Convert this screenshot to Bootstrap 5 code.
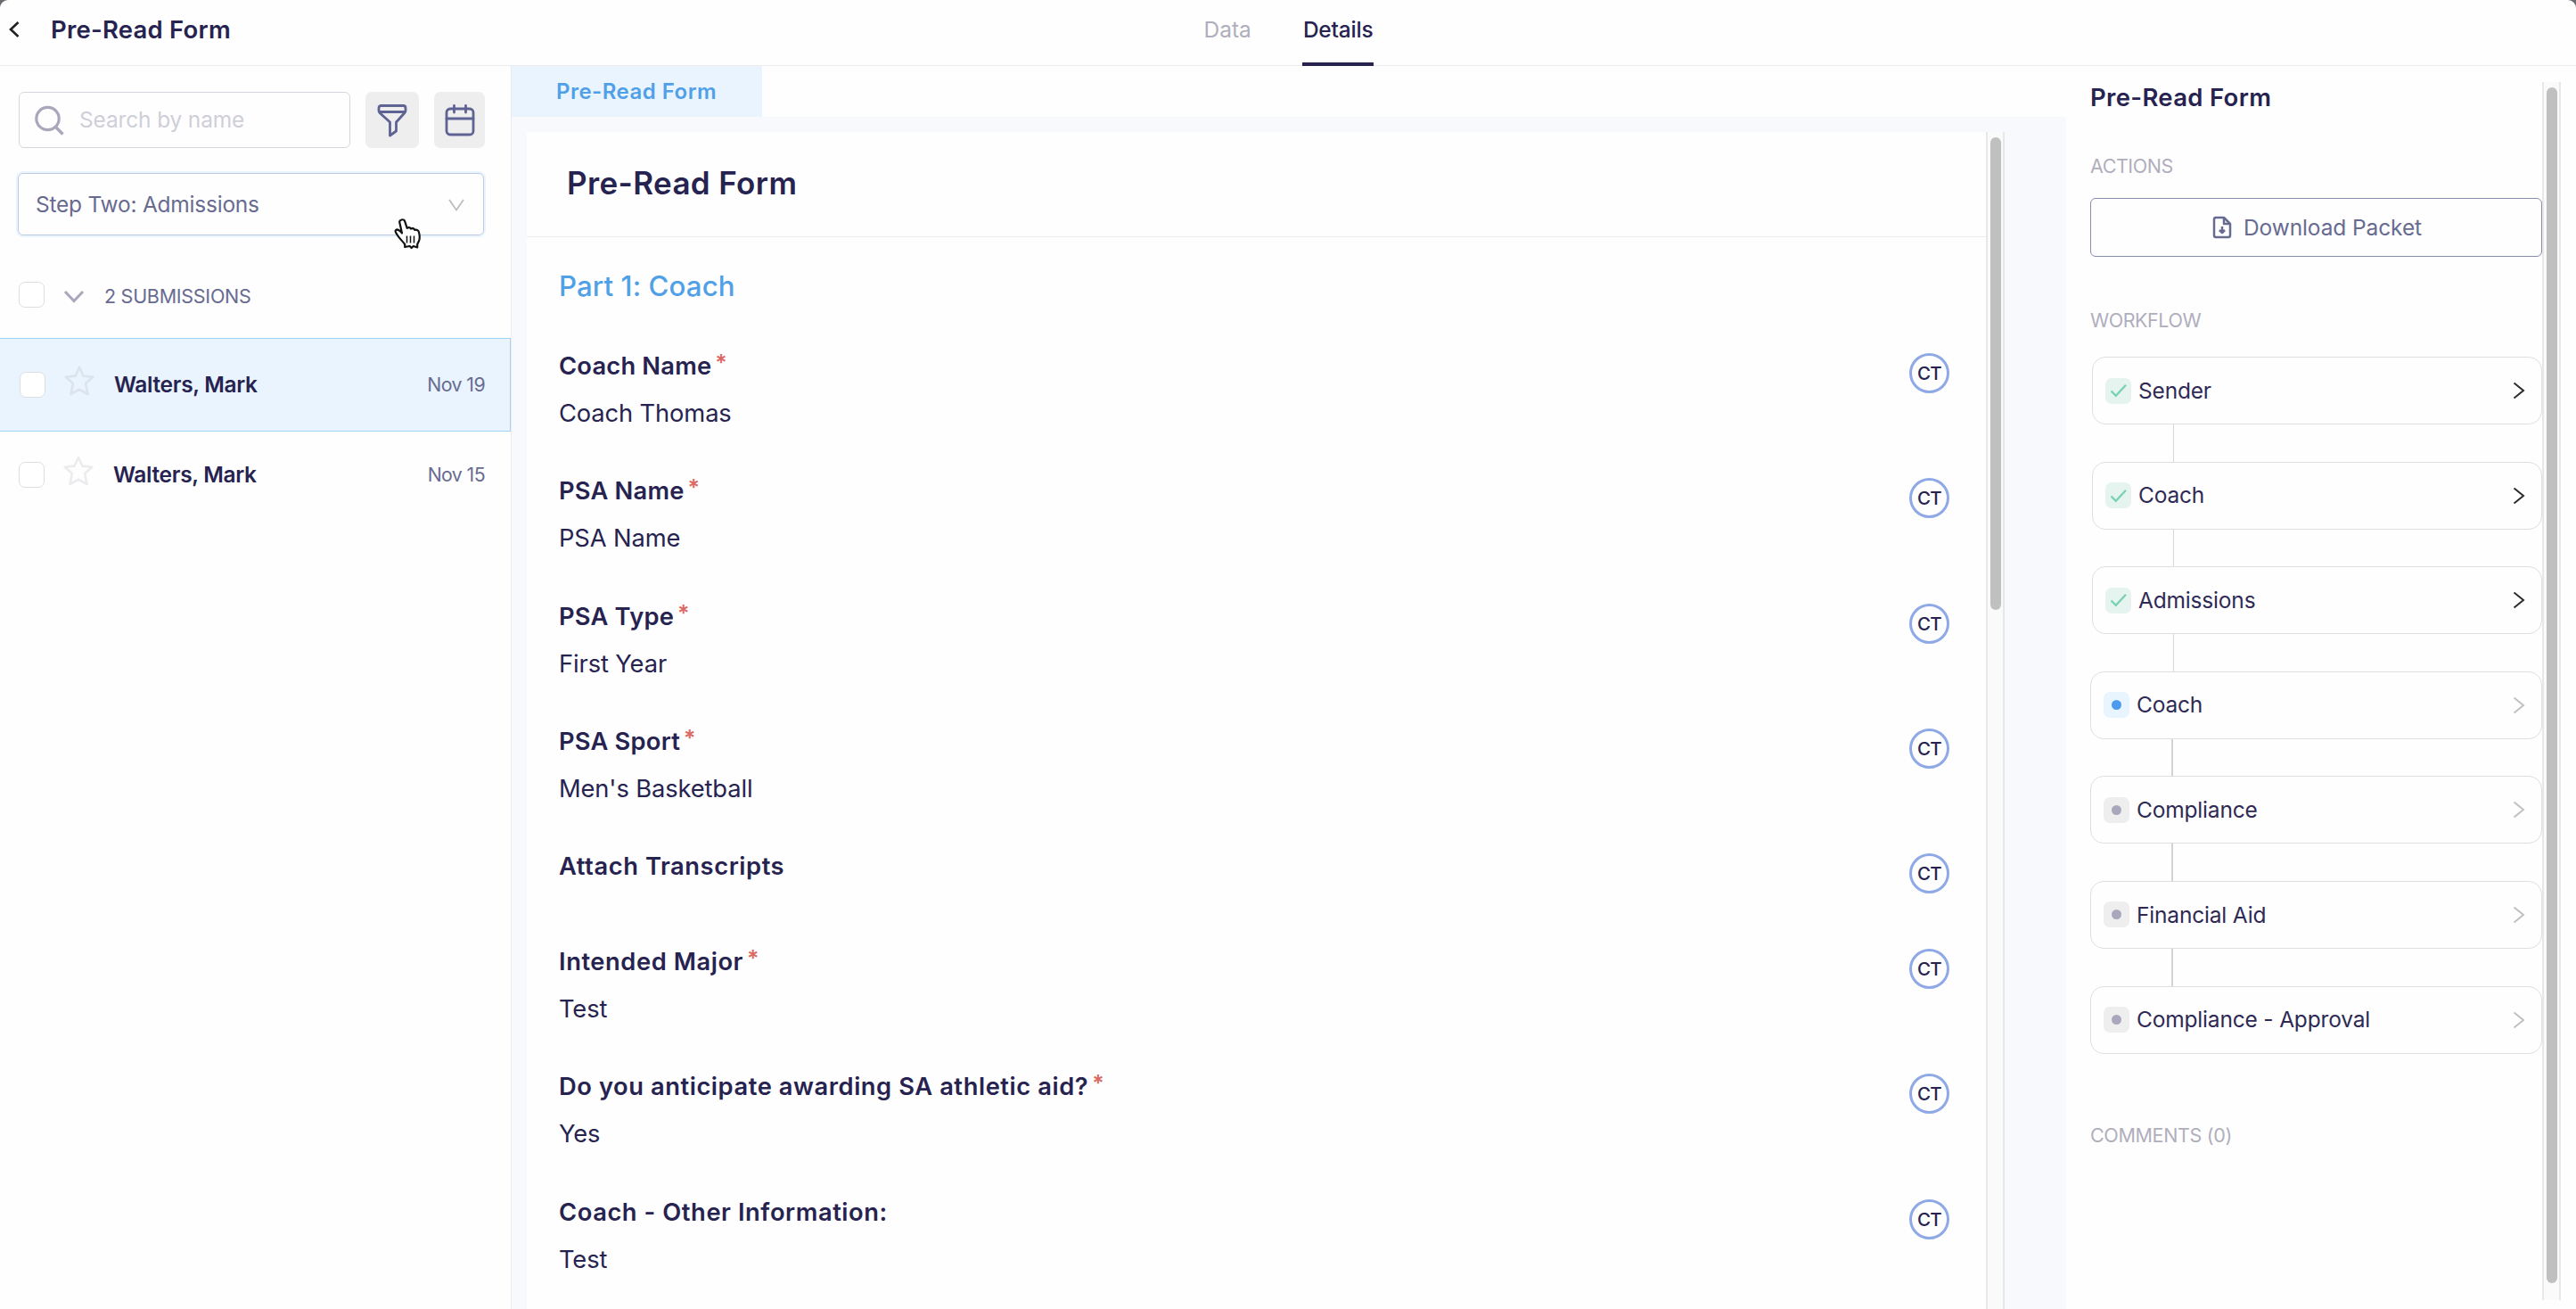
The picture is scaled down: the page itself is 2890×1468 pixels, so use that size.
<!DOCTYPE html>
<html lang="en">
<head>
<meta charset="utf-8">
<title>Pre-Read Form</title>
<link href="https://cdn.jsdelivr.net/npm/bootstrap@5.3.0/dist/css/bootstrap.min.css" rel="stylesheet">
<style>
  body { font-family: Inter, Roboto, sans-serif; background: #6b6b72; color: #272350; overflow: hidden; font-size: 25px; }
  .app-window { height: 1468px; background: #fefefe; border-radius: 9px 9px 0 0; overflow: hidden; }
  .ink-soft { color: #686b90; }
  .ink-mute { color: #b0aebd; }
  svg { display: block; flex: none; fill: none; }

  .top-bar { height: 74px; border-bottom: 1px solid #ebebee; flex: none; }
  .back-arrow { margin: 23px 0 0 9px; }
  .top-bar .page-name { line-height: 67px; font-size: 27.5px; font-weight: 600; margin-left: 34px; letter-spacing: .22px; }
  .top-tab { line-height: 66px; height: 74px; font-size: 24.5px; padding: 0 1px; }
  .top-tab.current { border-bottom: 4px solid #272350; font-weight: 500; letter-spacing: -.2px; margin-left: 56px; }
  .top-bar nav { padding-left: 1px; }

  .side-list { width: 574px; border-right: 1px solid #ececf0; flex: none; }
  .side-tools { padding: 29px 0 0 21px; }
  .search-box { width: 372px; height: 63px; border: 1.5px solid #d6d6de; border-radius: 6px; padding-left: 16px; }
  .search-box span { color: #cfcfd9; margin-left: 15px; font-size: 24.5px; letter-spacing: -.15px; }
  .tool-btn { height: 63px; width: 60px; margin-left: 17px; background: #eeeeee; border-radius: 7px; }
  .tool-btn.slim { width: 57px; }
  .step-select { width: 523px; height: 70px; margin: 28px 0 0 20px; border: 1.5px solid #bccbe2; border-radius: 6px; box-shadow: 0 0 0 2px #eaf4fd; padding: 1px 21px 0 19px; font-size: 24.5px; letter-spacing: -.23px; }
  .group-row { height: 115px; padding: 52px 0 0 21px; }
  .group-row .fold { margin: 9px 0 0 21px; }
  .group-row span { font-size: 21.5px; line-height: 32px; margin-left: 22px; letter-spacing: -.27px; }
  .tick-box { width: 29px; height: 29px; border: 1.5px solid #dedee2; border-radius: 7px; background: #fff; flex: none; }
  .entry-row { height: 97px; padding: 0 29px 0 21px; }
  .entry-row.picked { height: 105px; background: #e9f4fe; border: 1.5px solid #a0d4f6; padding: 0 28px 0 22px; border-left: 0; }
  .star-mark { margin: -9px 0 0 21px; color: #ececef; }
  .picked .star-mark { color: #dbe4ec; }
  .entry-name { font-size: 24.5px; font-weight: 600; margin-left: 22px; letter-spacing: -.32px; }
  .entry-date { font-size: 21.3px; letter-spacing: -.6px; }

  .form-tabs { height: 57px; flex: none; }
  .form-tab { width: 281px; background: #e9f4fe; color: #50a0e8; font-size: 24px; font-weight: 600; padding-left: 50px; line-height: 57px; letter-spacing: .48px; }
  .canvas-area { background: #f7f9fc; padding: 17px 69px 0 17px; min-height: 0; }
  .sheet { background: #fefefe; }
  .sheet-head { height: 118px; border-bottom: 1.5px solid #ebebee; padding-left: 45px; font-size: 35px; font-weight: 600; line-height: 114px; letter-spacing: .38px; }
  .sheet-body { padding: 28px 41px 0 36px; }
  .part-title { font-size: 31.2px; font-weight: 500; color: #50a0e8; line-height: 54px; margin-bottom: 42px; letter-spacing: .1px; }
  .field-item { height: 140.3px; }
  .field-item.no-value { height: 107px; }
  .field-label { font-size: 27.3px; font-weight: 600; line-height: 54px; margin-top: -6px; letter-spacing: .2px; }
  .field-label.spaced { letter-spacing: .57px; }
  .field-value { font-size: 27.3px; line-height: 52px; letter-spacing: -.12px; }
  .req { color: #dc6a64; font-size: 25px; position: relative; top: -4px; margin-left: 4px; }
  .initials { width: 45px; height: 45px; border: 3px solid #8fa8e6; border-radius: 50%; font-size: 20.5px; line-height: 39px; text-align: center; margin-top: 6px; font-weight: 500; letter-spacing: -.6px; }
  .scroll-track { width: 21px; background: #fafafa; border: solid #e8e8e8; border-width: 0 2px; flex: none; }
  .scroll-thumb { width: 12px; height: 530px; background: #c0c0c0; border-radius: 6px; margin: 6px auto 0; }
  .scroll-thumb.tall { height: 1341px; }

  .info-panel { width: 572px; flex: none; padding: 18px 17px 10px 27px; }
  .info-main { width: 507px; }
  .panel-title { font-size: 27.5px; font-weight: 600; line-height: 35px; letter-spacing: .32px; }
  .section-cap { font-size: 21.5px; line-height: 30px; letter-spacing: -.45px; }
  .section-cap.for-actions { margin-top: 44px; }
  .section-cap.for-flow { margin: 56px 0 26px; }
  .section-cap.for-comments { margin-top: 76px; letter-spacing: -.35px; }
  .packet-btn { height: 66px; border: 1.5px solid #8a8cab; border-radius: 6px; font-size: 24.5px; letter-spacing: -.1px; color: #686b90; margin-top: 21px; padding: 0; }
  .packet-btn svg { margin-left: 2px; margin-right: 13px; }
  .flow-card { height: 76px; border: 1.5px solid #dfdfe2; border-radius: 15px; padding: 0 18px 0 14px; font-size: 24.5px; letter-spacing: -.18px; color: #2e2a55; }
  .flow-card.finished { margin-left: 2px; }
  .flow-card .next-mark { color: #c0c0c4; }
  .flow-card.finished .next-mark { color: #2b2b2b; }
  .flow-link { height: 41.6px; width: 2px; background: #d2d2d9; margin-left: 91px; }
  .flow-link.thin { width: 1px; background: #d6d6db; margin-left: 93px; }
  .state-box { width: 29px; height: 29px; border-radius: 7px; background: #eeeeef; }
  .state-box.ok { background: #e5f4ef; }
  .state-box.now { background: #e8f4fe; }
  .state-box i { width: 11px; height: 11px; border-radius: 50%; background: #a9a7bb; }
  .state-box.now i { background: #4b9cee; }
  .flow-name { margin-left: 8px; }
  .pointer { position: absolute; left: 440px; top: 243px; }
</style>
</head>
<body>
<svg width="0" height="0" class="position-absolute">
  <symbol id="star" viewBox="0 0 34 34"><path d="M17 1.800l4.400 9.800 10.800 1.100-8.100 7.300 2.400 12-9.500-5.400-9.500 5.400 2.400-12-8.100-7.300 10.800-1.100z" stroke="currentColor" stroke-width="2.600" stroke-linejoin="round"/></symbol>
  <symbol id="tick" viewBox="0 0 20 16"><path d="M1.500 8.500l5.300 5.300L18 1.800" stroke="#79d2b2" stroke-width="2.400"/></symbol>
  <symbol id="next" viewBox="0 0 14 20"><path d="M1.500 1.500l10.500 8.500-10.500 8.500" stroke="currentColor" stroke-width="2"/></symbol>
</svg>
<div class="app-window d-flex flex-column position-relative">
  <header class="top-bar d-flex">
    <div class="d-flex col align-items-start">
      <svg class="back-arrow" width="14" height="20" viewBox="0 0 14 20"><path d="M11.500 2L3 10l8.500 8" stroke="#222" stroke-width="2.600"/></svg>
      <div class="page-name">Pre-Read Form</div>
    </div>
    <nav class="d-flex">
      <div class="top-tab ink-mute">Data</div>
      <div class="top-tab current">Details</div>
    </nav>
    <div class="col"></div>
  </header>

  <div class="d-flex flex-grow-1" style="min-height:0">
    <aside class="side-list">
      <div class="side-tools d-flex">
        <div class="search-box d-flex align-items-center">
          <svg width="36" height="36" viewBox="0 0 36 36"><circle cx="15.500" cy="16" r="12.700" stroke="#a9a7bb" stroke-width="3.200"/><path d="M24 25l8.500 8.500" stroke="#a9a7bb" stroke-width="3.400"/></svg>
          <span>Search by name</span>
        </div>
        <div class="tool-btn d-flex align-items-center justify-content-center">
          <svg width="34" height="38" viewBox="0 0 34 38" stroke="#5f6394" stroke-width="2.800" stroke-linejoin="round"><path d="M4.500 2.500h25q2.500 0 2.500 2.500v3q0 1.500-1.200 2.700L21.500 21v10l-7 5V21L3.200 10.700Q2 9.500 2 8V5q0-2.500 2.500-2.500z"/><path d="M2.500 9.500h29" stroke-width="3"/></svg>
        </div>
        <div class="tool-btn slim d-flex align-items-center justify-content-center">
          <svg width="34" height="36" viewBox="0 0 34 36" stroke="#5f6394" stroke-width="2.800" stroke-linecap="round"><rect x="2" y="5" width="30" height="29" rx="4"/><path d="M2 16h30M10.500 1.500v7.500M23.500 1.500v7.500"/></svg>
        </div>
      </div>
      <div class="step-select d-flex align-items-center justify-content-between ink-soft">
        <span>Step Two: Admissions</span>
        <svg width="18" height="14" viewBox="0 0 18 14"><path d="M1 1l8 11.500L17 1" stroke="#bdbdc2" stroke-width="1.800"/></svg>
      </div>
      <div class="group-row d-flex align-items-start">
        <div class="tick-box"></div>
        <svg class="fold" width="24" height="16" viewBox="0 0 24 16"><path d="M2 2l10 10.500L22 2" stroke="#a9a7bd" stroke-width="3"/></svg>
        <span class="ink-soft">2 SUBMISSIONS</span>
      </div>
      <div class="entry-row picked d-flex align-items-center">
        <div class="tick-box"></div>
        <svg class="star-mark" width="34" height="34"><use href="#star"/></svg>
        <span class="entry-name">Walters, Mark</span>
        <span class="entry-date ink-soft ms-auto">Nov 19</span>
      </div>
      <div class="entry-row d-flex align-items-center">
        <div class="tick-box"></div>
        <svg class="star-mark" width="34" height="34"><use href="#star"/></svg>
        <span class="entry-name">Walters, Mark</span>
        <span class="entry-date ink-soft ms-auto">Nov 15</span>
      </div>
    </aside>

    <main class="d-flex flex-column flex-grow-1">
      <div class="form-tabs d-flex"><div class="form-tab">Pre-Read Form</div></div>
      <div class="canvas-area d-flex flex-grow-1">
        <section class="sheet flex-grow-1">
          <div class="sheet-head">Pre-Read Form</div>
          <div class="sheet-body">
            <div class="part-title">Part 1: Coach</div>
            <div id="fields"></div>
          </div>
        </section>
        <div class="scroll-track"><div class="scroll-thumb"></div></div>
      </div>
    </main>

    <aside class="info-panel d-flex">
      <div class="info-main">
        <div class="panel-title">Pre-Read Form</div>
        <div class="section-cap for-actions ink-mute">ACTIONS</div>
        <button class="packet-btn btn w-100 d-flex align-items-center justify-content-center">
          <svg width="22" height="26" viewBox="0 0 22 26" stroke="#686b90" stroke-width="2.500" stroke-linejoin="round"><path d="M13 2H4Q2 2 2 4v18q0 2 2 2h14q2 0 2-2V9z"/><path d="M13 2v7h7M11 12v7M8 16l3 3 3-3"/></svg>
          <span>Download Packet</span>
        </button>
        <div class="section-cap for-flow ink-mute">WORKFLOW</div>
        <div id="flow"></div>
        <div class="section-cap for-comments ink-mute">COMMENTS (0)</div>
      </div>
      <div class="scroll-track"><div class="scroll-thumb tall"></div></div>
    </aside>
  </div>

  <svg class="pointer" width="34" height="38" viewBox="0 0 34 38"><path d="M10.500 3.500c2-.8 3.300.5 3.900 2.300l2.300 7c1.500-1.300 3.600-.9 4.300.8 1.500-1.100 3.700-.5 4.300 1.300 2-.8 4 .3 4.600 2.300.9 3 1.200 6.500.3 9.500l-2 4.300v3.500l-4.500-1.500-2 2-2-2-5.500 1v-3c-2.500-3.500-6-6.500-8.500-10.500-1.500-2-3-4-1.700-5.300 1.600-1.500 4 0 5.500 1.500l1.500 1.700L8.300 6.500c-.4-1.300.8-2.500 2.200-3z" fill="#fff" stroke="#111" stroke-width="2.200" stroke-linejoin="round"/><path d="M16.500 21.500v8M20.500 21.500v8M24.500 21.500v8" stroke="#111" stroke-width="1.500"/></svg>
</div>
<script src="https://cdn.jsdelivr.net/npm/bootstrap@5.3.0/dist/js/bootstrap.bundle.min.js"></script>
<script>
  const fields = [
    ["Coach Name", "Coach Thomas", true],
    ["PSA Name", "PSA Name", true],
    ["PSA Type", "First Year", true],
    ["PSA Sport", "Men's Basketball", true],
    ["Attach Transcripts", "", false],
    ["Intended Major", "Test", true],
    ["Do you anticipate awarding SA athletic aid?", "Yes", true],
    ["Coach - Other Information:", "Test", false]
  ];
  document.getElementById("fields").innerHTML = fields.map(([label, value, required]) => `
    <div class="field-item d-flex justify-content-between align-items-start ${value ? "" : "no-value"}">
      <div>
        <div class="field-label ${label.length > 10 ? "spaced" : ""}">${label}${required ? '<span class="req">*</span>' : ""}</div>
        <div class="field-value">${value}</div>
      </div>
      <div class="initials">CT</div>
    </div>`).join("");

  const steps = [["Sender", "ok"], ["Coach", "ok"], ["Admissions", "ok"], ["Coach", "now"],
                 ["Compliance", ""], ["Financial Aid", ""], ["Compliance - Approval", ""]];
  document.getElementById("flow").innerHTML = steps.map(([name, state], i) => `
    ${i ? `<div class="flow-link ${i < 4 ? "thin" : ""}"></div>` : ""}
    <div class="flow-card d-flex align-items-center ${state === "ok" ? "finished" : ""}">
      <div class="state-box d-flex align-items-center justify-content-center ${state}">
        ${state === "ok" ? '<svg width="20" height="16"><use href="#tick"/></svg>' : "<i></i>"}
      </div>
      <span class="flow-name">${name}</span>
      <svg class="next-mark ms-auto" width="14" height="20"><use href="#next"/></svg>
    </div>`).join("");
</script>
</body>
</html>
